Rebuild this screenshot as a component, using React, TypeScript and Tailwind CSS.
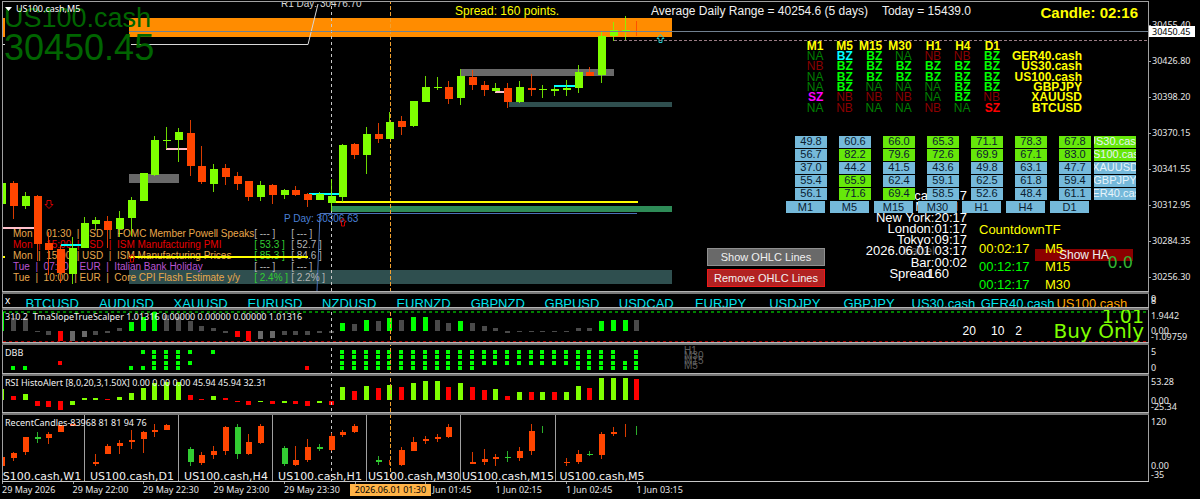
import type { ReactNode } from "react";

type Candle = [index: number, color: "g" | "r", high: number, top: number, bottom: number, low: number];

// Horizontal distance between two bars on the time scale
const STEP = 11.76;
const barX = (i: number) => Math.round(2.4 + i * STEP);

const mainCandles: Candle[] = [
  [0, "g", 174, 183, 204, 204],
  [1, "r", 181, 183, 206, 219],
  [2, "g", 192, 196, 206, 209],
  [3, "r", 195, 196, 244, 261],
  [4, "r", 232, 243, 250, 275],
  [5, "r", 245, 249, 273, 283],
  [6, "g", 237, 248, 274, 284],
  [7, "g", 217, 223, 248, 248],
  [8, "g", 217, 220, 224, 230],
  [9, "r", 216, 221, 230, 248],
  [10, "g", 211, 218, 229, 237],
  [11, "g", 197, 200, 218, 236],
  [12, "g", 173, 173, 201, 201],
  [13, "g", 136, 140, 175, 176],
  [14, "g", 127, 140, 141, 149],
  [15, "g", 128, 132, 140, 162],
  [16, "r", 120, 133, 166, 176],
  [17, "r", 146, 166, 182, 184],
  [18, "g", 164, 169, 184, 192],
  [19, "r", 164, 168, 177, 185],
  [20, "r", 172, 176, 184, 190],
  [21, "r", 181, 181, 197, 201],
  [22, "g", 181, 185, 197, 201],
  [23, "r", 184, 185, 195, 204],
  [24, "g", 189, 190, 195, 199],
  [25, "r", 186, 190, 195, 196],
  [26, "r", 193, 194, 200, 207],
  [27, "g", 192, 194, 200, 200],
  [28, "g", 179, 196, 203, 211],
  [29, "g", 144, 145, 197, 202],
  [30, "r", 143, 144, 155, 159],
  [31, "g", 127, 134, 155, 174],
  [32, "r", 123, 134, 139, 143],
  [33, "g", 112, 122, 139, 139],
  [34, "r", 116, 121, 127, 135],
  [35, "g", 101, 101, 126, 127],
  [36, "g", 76, 87, 102, 102],
  [37, "g", 77, 87, 88, 90],
  [38, "r", 81, 87, 99, 104],
  [39, "g", 69, 76, 98, 105],
  [40, "r", 70, 77, 85, 90],
  [41, "r", 81, 85, 90, 96],
  [42, "g", 83, 88, 91, 92],
  [43, "r", 83, 88, 102, 108],
  [44, "g", 81, 87, 102, 103],
  [45, "r", 74, 88, 90, 96],
  [46, "g", 85, 89, 90, 98],
  [47, "g", 87, 89, 91, 96],
  [48, "g", 80, 88, 90, 96],
  [49, "g", 65, 72, 88, 93],
  [50, "r", 67, 72, 76, 76],
  [51, "g", 31, 36, 75, 83],
  [52, "g", 22, 30, 36, 41],
  [53, "g", 16, 30, 32, 41],
  [54, "r", 21, 31, 32, 36],
];

const recentCandles: Candle[] = [
  [0, "r", 457, 457, 466, 466],
  [1, "r", 452, 453, 458, 461],
  [2, "r", 437, 437, 452, 455],
  [3, "g", 432, 437, 439, 443],
  [4, "r", 432, 434, 438, 444],
  [5, "r", 425, 425, 432, 432],
  [6, "r", 424, 424, 426, 426],
  [8, "r", 454, 462, 464, 466],
  [9, "r", 444, 446, 454, 454],
  [10, "r", 440, 443, 446, 454],
  [11, "r", 430, 440, 442, 449],
  [12, "r", 431, 432, 439, 453],
  [13, "r", 424, 430, 432, 437],
  [14, "r", 424, 425, 430, 430],
  [16, "g", 447, 449, 462, 466],
  [17, "r", 452, 455, 463, 465],
  [18, "r", 446, 451, 455, 459],
  [19, "r", 426, 427, 451, 455],
  [20, "g", 424, 427, 454, 459],
  [21, "r", 434, 442, 454, 455],
  [22, "r", 424, 426, 443, 444],
  [24, "g", 446, 448, 464, 466],
  [25, "r", 446, 460, 465, 466],
  [26, "r", 439, 447, 460, 462],
  [27, "g", 444, 447, 449, 451],
  [28, "r", 433, 436, 450, 451],
  [29, "r", 430, 432, 435, 437],
  [30, "r", 424, 426, 432, 433],
  [32, "g", 456, 460, 462, 465],
  [33, "r", 460, 460, 460, 465],
  [34, "r", 447, 450, 465, 466],
  [35, "r", 437, 442, 451, 451],
  [36, "r", 436, 439, 441, 444],
  [37, "r", 434, 437, 439, 442],
  [38, "r", 424, 427, 437, 438],
  [40, "r", 452, 462, 464, 464],
  [41, "r", 449, 459, 462, 465],
  [42, "r", 454, 457, 459, 466],
  [43, "g", 451, 457, 458, 462],
  [44, "r", 447, 451, 458, 461],
  [45, "r", 424, 431, 451, 455],
  [46, "g", 426, 426, 426, 433],
  [48, "r", 458, 462, 463, 466],
  [49, "r", 450, 454, 462, 464],
  [50, "g", 451, 454, 455, 456],
  [51, "r", 432, 434, 455, 459],
  [52, "r", 427, 432, 434, 436],
  [53, "r", 424, 424, 424, 437],
  [54, "g", 426, 426, 426, 435],
];

const slopeValues = [
  19, 13, 13, -1, -4, -10, -10, -6, -4, -2, 3, 9, 14, 19, 16, 14, 10, 5, 3, -2, -6, -10, -8, -7, -4, -4, -4, -2, -2, 8, 7,
  11, 10, 13, 11, 14, 14, 11, 8, 10, 8, 5, 3, -2, -1, -1, -1, -1, -1, 3, 3, 10, 11, 11, 11,
];
const slopeUp = [0, 11, 12, 13, 29, 31, 33, 35, 36, 39, 51, 52, 53];
const slopeDown = [5, 20, 21];
const slopeWeak = [6, 7, 22, 23];

const rsiValues = [
  11, 4, 6, -5, -6, -9, -4, 2, 2, 1, 3, 7, 12, 17, 18, 18, 5, 1, 4, 2, -1, -4, -1, -3, -2, -3, -5, -2, -4, 13, 9, 14, 12,
  15, 13, 17, 19, 19, 13, 17, 13, 10, 11, 4, 8, 8, 8, 8, 8, 14, 12, 22, 22, 22, 21,
];
const rsiDown = [1, 3, 4, 5, 9, 16, 17, 19, 20, 21, 23, 25, 26, 28, 30, 32, 34, 38, 40, 41, 43, 45, 47, 50, 54];

// Row numbers lit for each bar; a negative number is a red dot
const dbbDots: Record<number, number[]> = {
  0: [4], 1: [4], 2: [4], 5: [-3], 11: [4], 12: [1, 4], 13: [1, 2, 3, 4], 14: [1, 2, 3, 4], 15: [1, 2, 3, 4],
  16: [1, 3], 18: [1], 26: [-4], 53: [3, 4], 54: [1, 2, 3, 4],
};
for (let i = 29; i <= 52; i++) dbbDots[i] = i >= 41 && i <= 48 ? [1, 2, 3] : [1, 2, 3, 4];
const dbbRowY = [350, 355, 361, 366];

const symbols = [
  "BTCUSD", "AUDUSD", "XAUUSD", "EURUSD", "NZDUSD", "EURNZD", "GBPNZD", "GBPUSD", "USDCAD", "EURJPY", "USDJPY",
  "GBPJPY", "US30.cash", "GER40.cash", "US100.cash",
];

const timeframes = ["M1", "M5", "M15", "M30", "H1", "H4", "D1"];

const signals = [
  { symbol: "GER40.cash", cells: ["NA", "BZ*", "BZ", "NA", "NB", "NB", "BZ"] },
  { symbol: "US30.cash", cells: ["NB", "BZ", "BZ", "BZ", "BZ", "BZ", "BZ"] },
  { symbol: "US100.cash", cells: ["NA", "BZ", "BZ", "BZ", "BZ", "BZ", "BZ"] },
  { symbol: "GBPJPY", cells: ["NA", "BZ", "NA", "NA", "NA", "BZ", "BZ"] },
  { symbol: "XAUUSD", cells: ["SZ*", "NB", "NB", "NB", "NA", "BZ", "NB"] },
  { symbol: "BTCUSD", cells: ["NA", "NB", "NA", "NA", "NB", "NA", "SZ"] },
];

const signalColor: Record<string, string> = {
  NA: "text-[#008000]",
  NB: "text-[#8b0000]",
  BZ: "text-[#00ff00]",
  "BZ*": "text-[#00ffff]",
  SZ: "text-[#ff0000]",
  "SZ*": "text-[#ff00ff]",
};

const strength = [
  { symbol: "US30.cash", hot: true, cells: [49.8, 60.6, 66.0, 65.3, 71.1, 78.3, 67.8] },
  { symbol: "US100.cash", hot: true, cells: [56.7, 82.2, 79.6, 72.6, 69.9, 67.1, 83.0] },
  { symbol: "XAUUSD", hot: false, cells: [37.0, 44.2, 41.5, 43.6, 49.8, 63.1, 47.7] },
  { symbol: "GBPJPY", hot: false, cells: [55.4, 65.9, 62.4, 59.1, 62.5, 61.8, 59.4] },
  { symbol: "GER40.cash", hot: false, cells: [56.1, 71.6, 69.4, 58.5, 52.6, 48.4, 61.1] },
];

const news = [
  { text: "Mon  |  01:30  | USD  |  FOMC Member Powell Speaks", color: "text-[#e8a84c]", actual: "[ --- ]", previous: "[ --- ]", beat: false },
  { text: "Mon  |  15:00  | USD  |  ISM Manufacturing PMI", color: "text-[#e60000]", actual: "[ 53.3 ]", previous: "[ 52.7 ]", beat: true },
  { text: "Mon  |  15:00  | USD  |  ISM Manufacturing Prices", color: "text-[#e8a84c]", actual: "[ 85.3 ]", previous: "[ 84.6 ]", beat: true },
  { text: "Tue  |  07:00  | EUR  |  Italian Bank Holiday", color: "text-[#ba55d3]", actual: "[ --- ]", previous: "[ --- ]", beat: false },
  { text: "Tue  |  10:00  | EUR  |  Core CPI Flash Estimate y/y", color: "text-[#e8a84c]", actual: "[ 2.4% ]", previous: "[ 2.2% ]", beat: true },
];

const prices = ["30455.40", "30426.80", "30398.20", "30370.15", "30341.55", "30312.95", "30284.35", "30256.30"];

const times = [
  "29 May 2026", "29 May 22:00", "29 May 22:30", "29 May 23:00", "29 May 23:30", "", "1 Jun 01:45", "1 Jun 02:15",
  "1 Jun 02:45", "1 Jun 03:15",
];

function Candles({ data, width, up }: { data: Candle[]; width: number; up: string }) {
  return (
    <g shapeRendering="crispEdges">
      {data.map(([i, color, high, top, bottom, low]) => {
        const fill = color === "g" ? up : "#ff4500";
        return (
          <g key={i} fill={fill}>
            <rect x={barX(i) - 1} y={high} width={1} height={low - high} opacity={0.85} />
            {bottom > top && <rect x={barX(i) - width / 2} y={top} width={width} height={bottom - top} />}
          </g>
        );
      })}
    </g>
  );
}

// Crosshair and day separator, repeated in each window
function TimeLines() {
  return (
    <g shapeRendering="crispEdges">
      <path d="M331.5 0V481" stroke="#c8c8c8" strokeWidth="1" strokeDasharray="3 3" />
      <path d="M390.5 0V481" stroke="#f0a030" strokeWidth="1" strokeDasharray="4 2" />
    </g>
  );
}

function Drawing({ top, children }: { top: number; children: ReactNode }) {
  return (
    <svg className="pointer-events-none absolute inset-0 h-full w-full" aria-hidden="true">
      <g transform={`translate(-3 ${-top})`}>{children}</g>
    </svg>
  );
}

type AxisLabel = { text: string; top: number };

function Panel({
  size,
  labels = [],
  axis,
  children,
}: {
  size: string;
  labels?: AxisLabel[];
  axis?: ReactNode;
  children: ReactNode;
}) {
  return (
    <section className={`flex ${size}`}>
      <div className="relative ml-[2px] flex-1 overflow-hidden border-x border-[#a0a0a0]">{children}</div>
      <div className="relative w-[51px] shrink-0 text-[9px] leading-[12px] text-[#e6e6e6]">
        {axis}
        {labels.map((label) => (
          <span key={label.text} className="absolute left-[2px]" style={{ top: label.top }}>
            {label.text}
          </span>
        ))}
      </div>
    </section>
  );
}

function Divider() {
  return <div className="ml-[2px] mr-[51px] h-[3px] border-t border-[#b4b4b4] bg-[#787878]" />;
}

function SignalTable() {
  return (
    <table className="absolute right-[66px] top-[39px] h-[72px] w-[288px] table-fixed font-['Liberation_Sans',sans-serif] text-[12px] leading-[10px]">
      <thead>
        <tr className="font-bold text-[#ffff00]">
          {timeframes.map((tf) => (
            <th key={tf} className="p-0 text-right">
              {tf}
            </th>
          ))}
          <th className="w-[82px] p-0" />
        </tr>
      </thead>
      <tbody>
        {signals.map((row) => (
          <tr key={row.symbol}>
            {row.cells.map((cell, i) => (
              <td key={i} className={`p-0 text-right ${cell[0] === "N" ? "" : "font-bold"} ${signalColor[cell]}`}>
                {cell.replace("*", "")}
              </td>
            ))}
            <th scope="row" className="p-0 text-right font-bold text-[#ffff00]">
              {row.symbol}
            </th>
          </tr>
        ))}
      </tbody>
    </table>
  );
}

function StrengthTable() {
  return (
    <table className="absolute right-[12px] top-[134px] w-[350px] table-fixed text-center font-['Liberation_Sans',sans-serif] text-[11px] leading-[11px] text-[#0a2030]">
      <tbody>
        {strength.map((row) => (
          <tr key={row.symbol}>
            {row.cells.map((value, i) => (
              <td key={i} className="h-[13px] py-0 pl-[9px] pr-[3px] align-top">
                <div className={`h-[12px] ${value > 65 ? "bg-[#66e80a]" : "bg-[#75b9da]"}`}>{value.toFixed(1)}</div>
              </td>
            ))}
            <th scope="row" className="w-[42px] p-0 align-top font-normal text-[#e8f4fa]">
              <div className={`flex h-[12px] justify-center overflow-hidden ${row.hot ? "bg-[#66e80a]" : "bg-[#75b9da]"}`}>
                <span>{row.symbol}</span>
              </div>
            </th>
          </tr>
        ))}
      </tbody>
      <tfoot>
        <tr>
          {timeframes.map((tf) => (
            <td key={tf} className="pb-0 pl-0 pr-[5px] pt-0">
              <button className="block h-[12px] w-full bg-[#75b9da]">{tf}</button>
            </td>
          ))}
          <td />
        </tr>
      </tfoot>
    </table>
  );
}

function Clocks() {
  return (
    <div className="absolute right-[181px] top-[188px] text-right font-['Liberation_Sans',sans-serif] text-[13px] leading-[11px] text-white">
      <div>cash:217</div>
      <div className="pr-[9px]">Manual</div>
      <div>New York:20:17</div>
      <div>London:01:17</div>
      <div>Tokyo:09:17</div>
      <div className="relative">
        <span className="absolute right-[32px] top-0 text-[#505050]">Label</span>
        <span className="relative">2026.06.01 03:17</span>
      </div>
      <div className="pt-px">Bar:00:02</div>
      <div className="pr-[18px]">
        <span>Spread</span>
        <span className="-ml-1">160</span>
      </div>
    </div>
  );
}

function Countdown() {
  return (
    <div className="absolute right-[76px] top-[219px] w-[93px] whitespace-nowrap font-['Liberation_Sans',sans-serif] text-[13px] leading-[18px] text-[#ffff00]">
      <div>CountdownTF</div>
      <dl className="grid grid-cols-[66px_1fr] pt-px">
        <dt>00:02:17</dt>
        <dd>M5</dd>
        <dt className="text-[#00ff00]">00:12:17</dt>
        <dd>M15</dd>
        <dt className="text-[#00ff00]">00:12:17</dt>
        <dd>M30</dd>
      </dl>
    </div>
  );
}

function MainChart() {
  return (
    <Panel
      size="min-h-[289px] flex-1"
      axis={
        <>
          <ul className="h-[289px] overflow-hidden pt-[5px]">
            {prices.map((price) => (
              <li key={price} className="flex h-[36px] items-center">
                <span className="mr-px h-px w-[2px] bg-[#a0a0a0]" />
                {price}
              </li>
            ))}
          </ul>
          <div className="absolute left-0 top-[24px] h-[11px] w-[46px] bg-white pl-[3px] leading-[11px] text-black">30450.45</div>
        </>
      }
    >
      <Drawing top={2}>
        <g shapeRendering="crispEdges">
          <rect x="129" y="18" width="543" height="19" fill="#ff8c00" />
          <rect x="2" y="18" width="3" height="19" fill="#ff8c00" />
          <rect x="129" y="174" width="50" height="9" fill="#696969" />
          <rect x="461" y="69" width="153" height="7" fill="#696969" />
          <rect x="509" y="102" width="163" height="5" fill="#2f4f4f" />
          <rect x="129" y="270" width="543" height="14" fill="#2f4f4f" />
          <rect x="331" y="206" width="341" height="6" fill="#2e8b57" />
        </g>
        <path d="M2 44.5H5M131 44.5H308L318 4" fill="none" stroke="#d8d8d8" />
        <path d="M317 291L320 213.5H637" fill="none" stroke="#4a70b8" />
      </Drawing>

      <div className="absolute left-[1px] top-[3px] font-['Liberation_Sans',sans-serif] text-[#006400]">
        <div className="text-[27px] leading-[27px]">US100.cash</div>
        <div className="text-[36px] leading-[32px]">30450.45</div>
      </div>

      <table className="absolute left-[10px] top-[226px] font-['Liberation_Sans',sans-serif] text-[10px] leading-[11px]">
        <tbody>
          {news.map((item) => (
            <tr key={item.text} className={item.color}>
              <td className="w-[239px] whitespace-pre p-0">{item.text}</td>
              <td className={`w-[37px] p-0 ${item.beat ? "text-[#32cd32]" : "text-[#b4b4b4]"}`}>{item.actual}</td>
              <td className="p-0 text-[#b4b4b4]">{item.previous}</td>
            </tr>
          ))}
        </tbody>
      </table>

      <span className="absolute left-[278px] top-[-4px] whitespace-nowrap font-['Liberation_Sans',sans-serif] text-[10px] leading-[12px] text-[#d8d8d8]">
        R1 Day: 30476.70
      </span>
      <span className="absolute left-[281px] top-[211px] whitespace-nowrap font-['Liberation_Sans',sans-serif] text-[10px] leading-[12px] text-[#4a80d8]">
        P Day: 30306.63
      </span>

      <Drawing top={2}>
        <TimeLines />
        <g shapeRendering="crispEdges">
          <path d="M2 228H34M166 149H187M495 92H504" stroke="#ffc0cb" strokeWidth="2" />
          <path d="M61 245H81M309 194H343M554 86H575" stroke="#00ffff" strokeWidth="2" />
          <path d="M2 257H5M129 257H308M331 202H638" stroke="#ffff00" strokeWidth="2" />
        </g>
        <Candles data={mainCandles} width={8} up="#7fff00" />
        <g fill="none" stroke="#d00000">
          <path d="M47 200.500H51V204.500H53L49 208.500L45 204.500H47Z" />
          <path d="M130.500 262V258H129L132 254.500L135 258H133.500V262Z" />
          <path d="M341.500 226V222H340L343 218.500L346 222H344.500V226Z" />
        </g>
        <g shapeRendering="crispEdges">
          <line x1="129" x2="3000" y1="31.5" y2="31.5" stroke="#708090" />
          <line x1="614" x2="3000" y1="40.5" y2="40.5" stroke="#9a7c84" strokeDasharray="3 2" />
        </g>
        <path d="M659 42.500V38.500H657L660.500 34.500L664 38.500H662V42.500Z" fill="none" stroke="#20c8c8" />
      </Drawing>

      <div className="absolute left-[2px] top-[1px] flex items-center gap-1 text-[9px] leading-[12px] text-white">
        <svg width="7" height="4" fill="white" aria-hidden="true">
          <path d="M0 0H7L3.500 4Z" />
        </svg>
        US100.cash,M5
      </div>

      <div className="absolute left-[452px] top-[2px] whitespace-nowrap font-['Liberation_Sans',sans-serif] text-[12px] leading-[14px] text-[#ffff00]">
        Spread: 160 points.
      </div>
      <div className="absolute right-[177px] top-[2px] flex gap-[14px] whitespace-nowrap font-['Liberation_Sans',sans-serif] text-[12px] leading-[14px] text-[#f0f0f0]">
        <span>Average Daily Range = 40254.6 (5 days)</span>
        <span>Today = 15439.0</span>
      </div>
      <div className="absolute right-[10px] top-[3px] whitespace-nowrap font-['Liberation_Sans',sans-serif] text-[15px] font-bold leading-[16px] text-[#ffff00]">
        Candle: 02:16
      </div>

      <SignalTable />
      <Clocks />
      <StrengthTable />

      <button className="absolute right-[15px] top-[247px] h-[12px] w-[98px] bg-[#8b0000] font-['Liberation_Sans',sans-serif] text-[12px] leading-[12px] text-[#f0f0f0]">
        Show HA
      </button>
      <Countdown />
      <div className="absolute right-[15px] top-[252px] font-['DejaVu_Sans',sans-serif] text-[16px] leading-[18px] text-[#32b432]">0.0</div>

      <div className="absolute right-[323px] top-[246px] flex w-[118px] flex-col gap-[3px] font-['Liberation_Sans',sans-serif] text-[11px] leading-[16px] text-[#f0f0f0]">
        <button className="h-[18px] border border-[#909090] bg-[#696969]">Show OHLC Lines</button>
        <button className="h-[18px] border border-[#f01818] bg-[#b22222]">Remove OHLC Lines</button>
      </div>
    </Panel>
  );
}

function SymbolBar() {
  return (
    <Panel
      size="h-[13px]"
      labels={[
        { text: "0", top: -1 },
        { text: "8", top: 1 },
      ]}
    >
      <div className="flex h-full items-start">
        <button className="w-[12px] shrink-0 text-left text-[10px] leading-[12px] text-white">
          <span className="pl-[2px]">x</span>
        </button>
        <nav className="mr-[19px] flex flex-1 pt-[2px] font-['Liberation_Sans',sans-serif] text-[13px] leading-[15px] text-[#00e5ee]">
          {symbols.map((symbol) => (
            <button
              key={symbol}
              className={`flex w-0 flex-1 justify-center overflow-hidden ${symbol === "US100.cash" ? "text-[#ffa500]" : ""}`}
            >
              <span>{symbol}</span>
            </button>
          ))}
        </nav>
      </div>
    </Panel>
  );
}

function SlopePanel() {
  return (
    <Panel
      size="h-[32px]"
      labels={[
        { text: "1.9442", top: 0 },
        { text: "0.00", top: 15 },
        { text: "-1.09759", top: 21 },
      ]}
    >
      <Drawing top={310}>
        <g shapeRendering="crispEdges">
          <line x1="3" x2="3000" y1="312" y2="312" stroke="#008000" strokeWidth="2" strokeDasharray="3 3" />
          <line x1="3" x2="3000" y1="341.5" y2="341.5" stroke="#b00000" strokeDasharray="3 3" />
          {slopeValues.map((v, i) => (
            <rect
              key={i}
              x={barX(i) - 3}
              y={v > 0 ? 331 - v : 331}
              width="5"
              height={Math.abs(v)}
              fill={
                slopeUp.includes(i) ? "#00ff00" : slopeDown.includes(i) ? "#ff0000" : slopeWeak.includes(i) ? "#696969" : "#4a4a4a"
              }
            />
          ))}
        </g>
        <TimeLines />
      </Drawing>
      <div className="absolute left-[2px] top-[1px] whitespace-pre text-[9px] leading-[12px] text-[#f0f0f0]">
        310.2  TmaSlopeTrueScalper 1.01316 0.00000 0.00000 0.00000 1.01316
      </div>
      <div className="absolute right-[126px] top-[14px] flex gap-[15px] font-['Liberation_Sans',sans-serif] text-[12px] leading-[14px] text-white">
        <span>20</span>
        <span>10</span>
        <span className="-ml-1">2</span>
      </div>
      <div className="absolute right-[4px] top-[-1px] text-right font-['DejaVu_Sans',sans-serif] leading-[15px] text-[#7fff00]">
        <div className="text-[19px] leading-[15px]">1.01</div>
        <div className="text-[20px] leading-[15px]">Buy Only</div>
      </div>
    </Panel>
  );
}

function DbbPanel() {
  return (
    <Panel
      size="h-[28px]"
      labels={[
        { text: "5", top: 1 },
        { text: "0", top: 17 },
      ]}
    >
      <Drawing top={345}>
        <g shapeRendering="crispEdges">
          {Object.entries(dbbDots).map(([i, rows]) =>
            rows.map((row) => (
              <rect
                key={`${i}-${row}`}
                x={barX(Number(i)) - 3}
                y={dbbRowY[Math.abs(row) - 1]}
                width="4"
                height="4"
                fill={row < 0 ? "#ff0000" : "#00ff00"}
              />
            )),
          )}
        </g>
        <TimeLines />
      </Drawing>
      <div className="absolute left-[2px] top-[2px] text-[9px] leading-[12px] text-[#f0f0f0]">DBB</div>
      <div className="absolute left-[681px] top-[3px] font-['Liberation_Sans',sans-serif] text-[10px] leading-[5px] text-[#606060]">
        <div>H1</div>
        <div>M30</div>
        <div>M15</div>
        <div>M5</div>
      </div>
    </Panel>
  );
}

function RsiPanel() {
  return (
    <Panel
      size="h-[36px]"
      labels={[
        { text: "53.28", top: 0 },
        { text: "0.00", top: 19 },
        { text: "-25.34", top: 25 },
      ]}
    >
      <Drawing top={376}>
        <g shapeRendering="crispEdges">
          {rsiValues.map((v, i) => (
            <rect
              key={i}
              x={barX(i) - 3}
              y={v > 0 ? 400 - v : 401}
              width="5"
              height={Math.abs(v)}
              fill={rsiDown.includes(i) ? "#ff0000" : "#7fff00"}
            />
          ))}
        </g>
        <TimeLines />
      </Drawing>
      <div className="absolute left-[2px] top-[1px] whitespace-nowrap text-[9px] leading-[12px] text-[#f0f0f0]">
        RSI HistoAlert [8,0,20,3,1.50X] 0.00 0.00 0.00 45.94 45.94 32.31
      </div>
    </Panel>
  );
}

function RecentCandlesPanel() {
  return (
    <Panel
      size="h-[66px]"
      labels={[
        { text: "120", top: 1 },
        { text: "0.00", top: 45 },
        { text: "-35", top: 54 },
      ]}
    >
      <Drawing top={415}>
        <path
          d="M84.500 415V481M178.500 415V481M272.500 415V481M366.500 415V481M460.500 415V481M555.500 415V481"
          stroke="#a0a0a0"
          strokeWidth="1"
          shapeRendering="crispEdges"
        />
        <TimeLines />
        <Candles data={recentCandles} width={6} up="#32cd32" />
      </Drawing>
      <div className="absolute left-[2px] top-[2px] whitespace-nowrap text-[9px] leading-[12px] text-[#f0f0f0]">
        RecentCandles-83968 81 81 94 76
      </div>
      <div className="absolute bottom-[-2px] left-[-12px] flex font-['DejaVu_Sans',sans-serif] text-[11px] leading-[13px] text-[#f0f0f0]">
        {["W1", "D1", "H4", "H1", "M30", "M15", "M5"].map((tf) => (
          <div key={tf} className="flex w-[94px] shrink-0 justify-center whitespace-nowrap">
            US100.cash,{tf}
          </div>
        ))}
      </div>
    </Panel>
  );
}

function TimeAxis() {
  return (
    <footer className="relative ml-[2px] mr-[51px] h-[18px] border-t border-[#c8c8c8] text-[9px] leading-[12px] text-[#e6e6e6]">
      <ol className="grid w-[705px] grid-cols-10">
        {times.map((time, i) => (
          <li key={i} className="whitespace-nowrap">
            <span className="block h-[2px] w-px bg-[#a0a0a0]" />
            {time}
          </li>
        ))}
      </ol>
      <div className="absolute left-[348px] top-[2px] h-[12px] w-[81px] bg-[#ffb347] text-center text-black">2026.06.01 01:30</div>
    </footer>
  );
}

export default function App() {
  return (
    <main className="flex min-h-screen flex-col overflow-hidden bg-black pt-px font-['Noto_Sans',sans-serif]">
      <div className="ml-[2px] mr-[51px] h-px bg-[#a0a0a0]" />
      <MainChart />
      <Divider />
      <SymbolBar />
      <Divider />
      <SlopePanel />
      <Divider />
      <DbbPanel />
      <Divider />
      <RsiPanel />
      <Divider />
      <RecentCandlesPanel />
      <TimeAxis />
    </main>
  );
}
